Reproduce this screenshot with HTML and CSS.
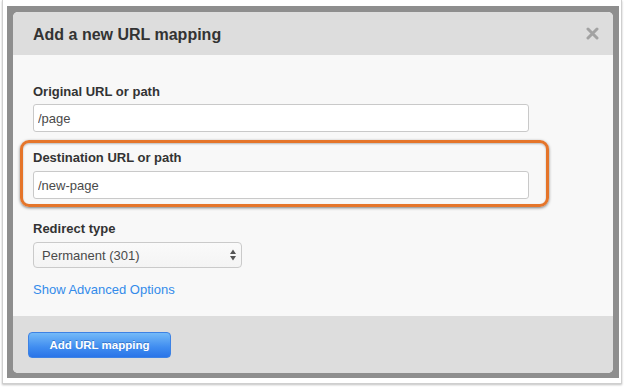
FILE: index.html
```html
<!DOCTYPE html>
<html>
<head>
<meta charset="utf-8">
<link rel="stylesheet" href="styles.css">
</head>
<body>
<div class="frame">
  <div class="backdrop">
    <div class="modal">
      <div class="modal-header">
        <h3 class="modal-title">Add a new URL mapping</h3>
        <svg class="close" width="13" height="13" viewBox="0 0 13 13"><path d="M2 2 L11 11 M11 2 L2 11" stroke="#a2a2a2" stroke-width="3" stroke-linecap="round"/></svg>
      </div>
      <div class="modal-body">
        <div class="field">
          <label class="field-label">Original URL or path</label>
          <input class="text-input" type="text" value="/page">
        </div>
        <div class="field field-dest">
          <label class="field-label">Destination URL or path</label>
          <input class="text-input" type="text" value="/new-page">
        </div>
        <div class="field field-type">
          <label class="field-label">Redirect type</label>
          <div class="select">
            <span class="select-value">Permanent (301)</span>
            <svg class="select-arrows" width="6" height="12" viewBox="0 0 6 12"><path d="M0 5 L3 0.5 L6 5 Z M0 7 L6 7 L3 11.5 Z" fill="#555"/></svg>
          </div>
        </div>
        <a class="advanced-link">Show Advanced Options</a>
      </div>
      <div class="modal-footer">
        <button class="btn-primary">Add URL mapping</button>
      </div>
    </div>
  </div>
  <div class="annotation"></div>
</div>
</body>
</html>
```
FILE: styles.css
```css
html, body {
  margin: 0;
  padding: 0;
  background: #ffffff;
}
body {
  width: 624px;
  height: 387px;
  overflow: hidden;
  font-family: "Liberation Sans", Arial, sans-serif;
}
.frame {
  position: relative;
  margin: 0 2px;
  width: 620px;
  box-sizing: border-box;
  border: 1px solid #cfcfcf;
  border-top: 0;
  padding: 6px 2px 5px 4px;
  box-shadow: 0 1px 2px rgba(0,0,0,0.25);
  background: #ffffff;
}
.backdrop {
  background: #8e8e8e;
  padding: 6px 6px 5px 6px;
  height: 372px;
  box-sizing: border-box;
}
.modal {
  width: 600px;
  border-radius: 5px;
  overflow: hidden;
  background: #f8f8f8;
}
.modal-header {
  display: flex;
  justify-content: space-between;
  align-items: flex-start;
  background: #dddddd;
  padding: 13px 14px 10px 20px;
}
.modal-title {
  margin: 0;
  font-size: 16px;
  line-height: 20px;
  font-weight: bold;
  color: #333333;
}
.close {
  margin-top: 2px;
  display: block;
}
.modal-body {
  padding: 28px 20px 17px 20px;
}
.field-label {
  display: block;
  font-size: 13px;
  line-height: 18px;
  font-weight: bold;
  color: #333333;
}
.text-input {
  display: block;
  margin: 3px 0 0 0;
  width: 496px;
  height: 28px;
  box-sizing: border-box;
  border: 1px solid #c9c9c9;
  border-radius: 3px;
  background: #ffffff;
  padding: 0 4px;
  font-family: "Liberation Sans", Arial, sans-serif;
  font-size: 13px;
  color: #4a4a4a;
  outline: none;
}
.field-dest {
  margin-top: 17px;
}
.field-dest .text-input {
  margin-top: 4px;
}
.field-type {
  margin-top: 21px;
}
.select {
  margin-top: 4px;
  width: 209px;
  height: 26px;
  box-sizing: border-box;
  border: 1px solid #cacaca;
  border-radius: 4px;
  background: linear-gradient(#fafafa, #f4f4f4);
  display: flex;
  align-items: center;
  justify-content: space-between;
  padding: 0 5px 0 8px;
}
.select-value {
  font-size: 13px;
  color: #4a4a4a;
}
.select-arrows {
  display: block;
}
.advanced-link {
  display: block;
  margin-top: 13px;
  font-size: 13px;
  line-height: 18px;
  color: #338bea;
}
.modal-footer {
  background: #dddddd;
  padding: 16px 15px 15px 15px;
}
.btn-primary {
  display: block;
  width: 143px;
  height: 26px;
  box-sizing: border-box;
  border: 1px solid #3d82e4;
  border-radius: 4px;
  background: linear-gradient(#74baf8, #3f8cf0 60%, #2a74e8);
  color: #ffffff;
  font-family: "Liberation Sans", Arial, sans-serif;
  font-size: 11.5px;
  font-weight: bold;
  text-shadow: 0 -1px 0 rgba(0,40,120,0.35);
  padding: 0;
}
.annotation {
  position: absolute;
  left: 17px;
  top: 140px;
  width: 529px;
  height: 67px;
  box-sizing: border-box;
  border: 3.5px solid #e5752a;
  border-radius: 9px;
  box-shadow: 0 1px 3px rgba(0,0,0,0.5), inset 0 1px 2px rgba(0,0,0,0.25);
}
```
